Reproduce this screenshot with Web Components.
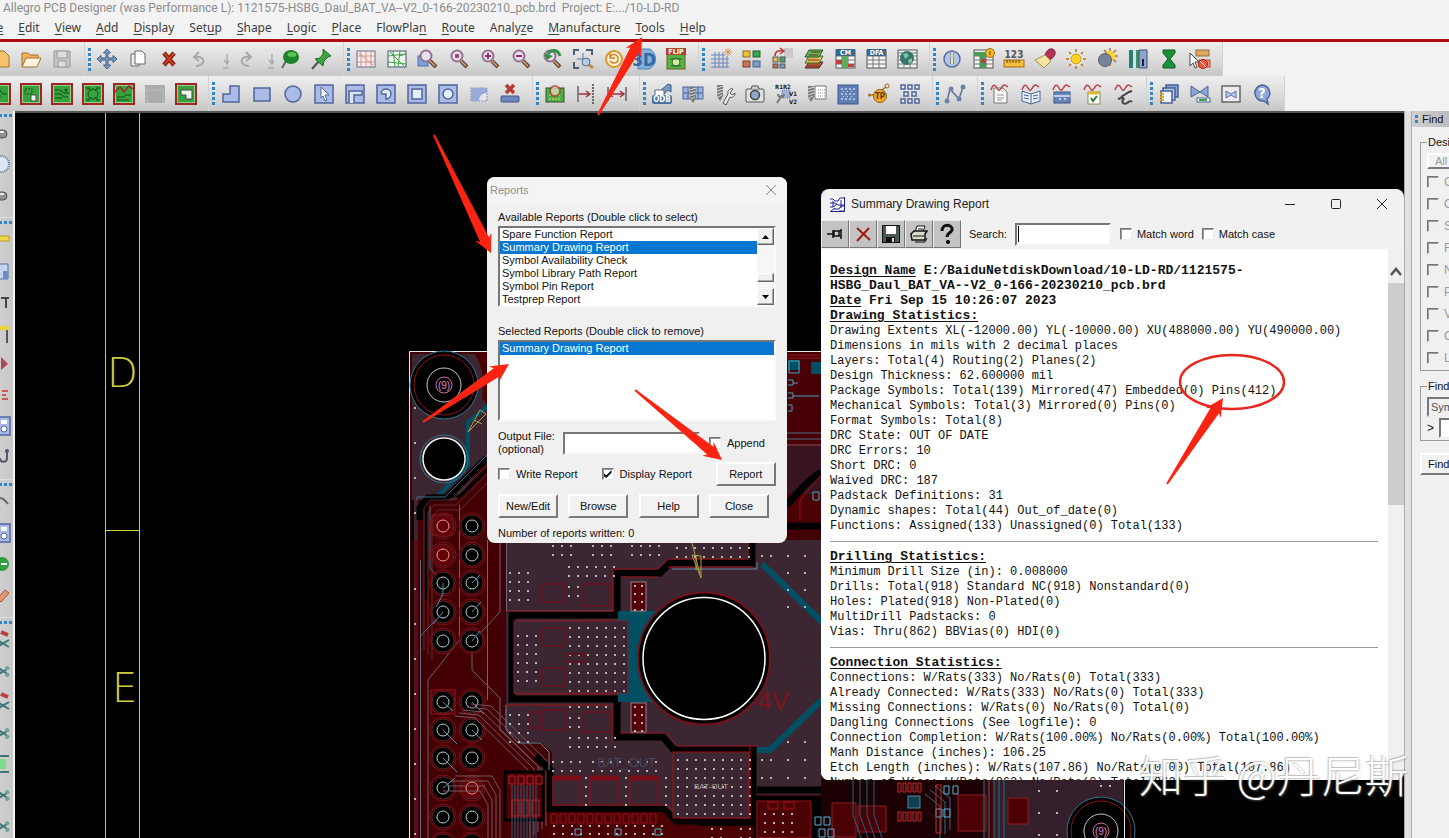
<!DOCTYPE html>
<html lang="en">
<head>
<meta charset="utf-8">
<title>Allegro PCB Designer</title>
<style>
  html, body { margin: 0; height: 100%; overflow: hidden; }
  body { background: #f2f2f2; font-family: "Liberation Sans", sans-serif; color: #111; }
</style>
</head>
<body>

<design-app>
  <report-picker slot="windows"></report-picker>
  <report-viewer slot="windows"></report-viewer>
</design-app>

<script>
// Shared base: render() returns the markup of the shadow root
class View extends HTMLElement {
  constructor() {
    super();
    this.attachShadow({ mode: 'open' });
  }
  connectedCallback() {
    this.shadowRoot.innerHTML = this.render();
  }
}

/* ---------- Icons, all on a 24 x 24 grid ---------- */

const lens = (inner) => `<path d="M14 14l6 6" stroke="#6b4a3a" stroke-width="4"/><path d="M14 14l5 5" stroke="#c9a27c" stroke-width="1.5"/>
  <circle cx="10" cy="9" r="5.5" fill="#e6e0ef" stroke="#96708f" stroke-width="2"/>${inner}`;
const card = (inner) => `<rect x="2" y="2" width="20" height="20" fill="#37a23b" stroke="#a02626" stroke-width="2"/>
  <rect x="3.5" y="3.5" width="17" height="17" fill="none" stroke="#8fd38a"/>${inner}`;
const blue = (inner) => `<rect x="3" y="3" width="18" height="18" fill="#a9bbe6" stroke="#51659c" stroke-width="1.5"/>${inner}`;
const wave = `<path d="M3 8c2-6 4-6 6-2s3 2 5-1 3-2 6 0" stroke="#b8434b" stroke-width="1.5" fill="none"/>`;
const sheet = (tag, color, inner = '') => `<rect x="3" y="3" width="19" height="18" fill="#f4f4f4" stroke="#555"/>
  <path d="M3 9h19M3 13h19M3 17h19M9 6v15M15 6v15" stroke="#777"/>${inner}
  ${tag ? `<rect x="3" y="2" width="19" height="7" fill="${color}"/><text x="12.5" y="8" font-size="7" font-weight="bold" fill="#fff" text-anchor="middle">${tag}</text>` : ''}`;
const drill = `<path d="M5 3h6v11l-3 5-3-5z" fill="#777"/><path d="M5 6l6-2M5 9l6-2M5 12l6-2M6 15l4-2" stroke="#ddd"/>`;

const ICONS = {
  file: `<path d="M7 4h9l5 5v11H7z" fill="#f4c36a" stroke="#a8712c"/>`,
  open: `<path d="M3 19V6h6l2 2h8v3" fill="#f0b457" stroke="#a8712c"/><path d="M3 20l4-9h15l-4 9z" fill="#fff4de" stroke="#a8712c"/>`,
  save: `<path d="M4 4h16v16H4z" fill="#c3c3c3" stroke="#999"/><path d="M7 4h10v7H7zM8 14h8v6H8z" fill="#ddd" stroke="#999"/>`,
  move: `<path d="M12 2l3.5 4H13v5h5V8.5l4 3.5-4 3.5V13h-5v5h2.5L12 22l-3.5-4H11v-5H6v2.5L2 12l4-3.5V11h5V6H8.5z" fill="#7d9dbf" stroke="#3f6186"/>`,
  copy: `<path d="M5 7h8v12H5z" fill="#eee" stroke="#666"/><path d="M9 4h7l3 3v10H9z" fill="#fff" stroke="#666"/>`,
  del: `<path d="M7 6l10 12M17 6L7 18" stroke="#7d1c10" stroke-width="4.5"/><path d="M7 6l10 12M17 6L7 18" stroke="#c9401c" stroke-width="2"/>`,
  undo: `<path d="M8 19c10 0 10-11-1-9M11 5L6 10l5 4" fill="none" stroke="#a9a9a9" stroke-width="2"/>`,
  redo: `<path d="M16 19c-10 0-10-11 1-9M13 5l5 5-5 4" fill="none" stroke="#a9a9a9" stroke-width="2"/>`,
  down: `<path d="M12 7v9M9 13l3 4 3-4M8 21h8" fill="none" stroke="#ababab" stroke-width="1.5"/>`,
  ball: `<path d="M8 14l-4 7" stroke="#666" stroke-width="2"/><ellipse cx="13" cy="10" rx="8" ry="7" fill="#1c8428"/><ellipse cx="14" cy="7.5" rx="4.5" ry="2.5" fill="#5cc25c"/>`,
  pin: `<path d="M10 14l-7 8" stroke="#555" stroke-width="2"/><path d="M14 2l8 7-3 1-4 4-1 5-8-7 5-1 3-4z" fill="#3da53f" stroke="#1b7023"/>`,
  ratsOff: `<rect x="3" y="4" width="18" height="16" fill="#f7eeee" stroke="#5d6a8c"/><path d="M7 4v16M12 4v16M17 4v16M3 9h18M3 15h18M5 6l14 12" stroke="#d3918a"/>`,
  ratsOn: `<rect x="3" y="4" width="18" height="16" fill="#eef7ee" stroke="#46536d"/><path d="M8 4l2 16M15 4l-2 16M3 9l18-2M3 15l18 2M5 5l14 14M14 9l7-2" stroke="#41a04a"/>`,
  zoomWin: `<rect x="2" y="9" width="10" height="10" fill="#78a2dc" stroke="#4a70a8"/>` + lens(''),
  zoomFit: lens('<path d="M8 7h4v4H8z" fill="#a8466b"/>'),
  zoomIn: lens('<path d="M7 9h6M10 6v6" stroke="#962f63" stroke-width="2"/>'),
  zoomOut: lens('<path d="M7 9h6" stroke="#962f63" stroke-width="2"/>'),
  zoomPrev: lens('<path d="M20 9C18 2 11 2 8 7" stroke="#2e9340" stroke-width="3"/><path d="M4 6l3 7 6-4z" fill="#2e9340"/>'),
  zoomSel: `<path d="M3 8V3h5M15 3h6v5M3 15v6h5" fill="none" stroke="#4c5f7b" stroke-width="2"/><path d="M6 12h12M12 6v12" stroke="#5878a4"/><path d="M17 17l5 4" stroke="#c58e45" stroke-width="3"/><circle cx="15" cy="15" r="4" fill="#b4cde8" stroke="#55718d"/>`,
  refresh: `<circle cx="12" cy="12" r="8" fill="#fff1db" stroke="#dc962b" stroke-width="2"/><path d="M8 10c2-4 8-3 8 2s-6 5-8 2M8 6v5h5" fill="none" stroke="#d58418" stroke-width="1.5"/>`,
  view3d: `<path d="M4 6l4-4h9c8 5 7 17-1 20H5z" fill="#7fb0de" stroke="#4e87be"/><text x="11" y="19" font-size="17" font-weight="bold" fill="#33699f" text-anchor="middle">3D</text>`,
  flip: `<rect x="3" y="7" width="18" height="15" fill="#55b445" stroke="#745b26"/><circle cx="12" cy="15" r="4" fill="#d8e8a0" stroke="#276b2a"/><path d="M6 12h12M7 19h10" stroke="#276b2a"/><rect x="2" y="1" width="20" height="7" fill="#b0402f"/><text x="12" y="7" font-size="7" font-weight="bold" fill="#fff" text-anchor="middle">FLIP</text>`,
  grid: `<path d="M6 5v16M10 5v16M14 5v16M18 9v12M2 8h14M2 12h18M2 16h18M2 20h18" stroke="#6c86bb"/><path d="M19 1v8M15 5h8M16 2l6 6M22 2l-6 6" stroke="#d29556"/>`,
  tiles: `<rect x="3" y="4" width="7" height="6" fill="#ecc332" stroke="#8a6d22"/><rect x="13" y="4" width="7" height="6" fill="#3ba652" stroke="#23602c"/><rect x="3" y="14" width="7" height="6" fill="#c87757" stroke="#7f3f28"/><rect x="13" y="14" width="7" height="6" fill="#7c9ccb" stroke="#44618f"/>`,
  swap: `<path d="M13 1h9v10h-9z" fill="#c9c9c9"/><rect x="2" y="10" width="5" height="5" fill="#d9c14d" stroke="#555"/><rect x="9" y="10" width="5" height="5" fill="#49a45b" stroke="#555"/><rect x="2" y="17" width="5" height="4" fill="#c66f55" stroke="#555"/><rect x="9" y="17" width="5" height="4" fill="#7c9ccb" stroke="#555"/><path d="M4 9c0-5 4-6 8-5M9 1l4 3-4 3" stroke="#c03a3a" fill="none" stroke-width="1.5"/>`,
  layers: `<path d="M7 15h14l-4 6H3z" fill="#b3523b" stroke="#4b2418"/><path d="M7 9h14l-4 7H3z" fill="#e1c050" stroke="#3d6b28"/><path d="M7 3h14l-4 7H3z" fill="#63b35a" stroke="#255c29"/><path d="M7 8h9M9 5h9M6 13h11M6 19h11" stroke="#7c2f22"/>`,
  cm: sheet('CM', '#39688c', '<path d="M9 9h6v12H9z" fill="#5aae5c"/><path d="M3 13h6v4H3zM15 17h6v3h-6z" fill="#c33f3f"/>'),
  dfa: sheet('DFA', '#3d6793'),
  globe: sheet('', '', '<path d="M3 6h19" stroke="#777"/><circle cx="12" cy="11" r="7" fill="#35756b"/><path d="M8 7l4-1 2 3-4 3zM13 13l4-2v4l-3 2z" fill="#7fc0a2"/>'),
  info: `<circle cx="12" cy="12" r="8" fill="#b4c3e8" stroke="#5b6c9d" stroke-width="1.5"/><path d="M12 10v7M12 6v2" stroke="#5b6c9d" stroke-width="4"/><path d="M12 10v7M12 6v2" stroke="#ecea9a" stroke-width="2.5"/>`,
  sheetInfo: sheet('', '', '<path d="M3 5h12v4H3zM9 9h6v12H9z" fill="#4c9a58"/><path d="M10 12h5v4h-5z" fill="#c33f3f"/>') + `<circle cx="19" cy="6" r="4.5" fill="#f0ba28" stroke="#9f6d14"/><path d="M19 4v4" stroke="#503a10"/>`,
  ruler: `<text x="12" y="11" font-size="10" font-weight="bold" fill="#555" text-anchor="middle">123</text><rect x="2" y="13" width="20" height="7" fill="#f2c03c" stroke="#a4661b"/><path d="M5 13v3M8 13v3M11 13v3M14 13v3M17 13v3" stroke="#6a3f11"/>`,
  brush: `<path d="M12 9c1-6 6-9 9-6s0 8-5 10z" fill="#b93156" stroke="#7d1d38"/><path d="M12 8l6 6-7 7-9-8z" fill="#f2e5a0" stroke="#a98f4a"/>`,
  sun: `<path d="M12 2v20M2 12h20M5 5l14 14M19 5L5 19" stroke="#b57325" stroke-width="1.5"/><circle cx="12" cy="12" r="7" fill="#eee"/><circle cx="12" cy="12" r="5" fill="#ffd42a" stroke="#cf8b16"/>`,
  shade: `<path d="M15 1v18M6 9h17M9 3l12 12M21 3L9 15" stroke="#b57325" stroke-width="1.5"/><circle cx="15" cy="9" r="5" fill="#ffd42a"/><circle cx="10" cy="13" r="6.5" fill="#77839c" stroke="#535f78"/>`,
  books: `<path d="M3 3h4v18H3z" fill="#2d7b78"/><path d="M7 3h3v18H7z" fill="#cfe6d9"/><path d="M10 3h3v18h-3z" fill="#3d9364"/><path d="M13 3h8v18h-8z" fill="#8fa5cb" stroke="#3a5078"/><path d="M17 12v7" stroke="#223" stroke-width="2"/>`,
  glass: `<path d="M6 3h12v3l-5 6 5 6v3H6v-3l5-6-5-6z" fill="#1a9138" stroke="#0d5b22"/>`,
  stop: `<rect x="8" y="3" width="13" height="6" fill="#dba765" stroke="#9d6c36"/><rect x="11" y="13" width="11" height="7" fill="#e89090" stroke="#b43"/><circle cx="15" cy="17" r="4.5" fill="#f05a3a" stroke="#b4220d"/><path d="M12 14l6 6" stroke="#fff"/><path d="M2 6l9 9H7l2 5-2 1-2-5-3 3z" fill="#fff" stroke="#444"/>`,

  card1: card('<path d="M5 7h6l4 5h4M5 14h8" stroke="#154f1c" fill="none"/>'),
  card2: card('<path d="M6 7h7v5H6z" stroke="#154f1c" fill="none" stroke-dasharray="2 1"/><path d="M12 13h5v6h-5z" fill="#fff" stroke="#445"/>'),
  card3: card('<path d="M5 8h5l4 3h5M5 12h6l3 3h4M5 16h7" stroke="#154f1c" fill="none"/><circle cx="16" cy="8" r="1.5" fill="#154f1c"/>'),
  card4: card('<circle cx="12" cy="12" r="5" fill="none" stroke="#154f1c"/><path d="M5 6h4M15 6h4M5 18h4M15 18h4M7 6l3 3M17 6l-3 3M7 18l3-3M17 18l-3-3" stroke="#154f1c"/>'),
  card5: card('<path d="M2 11l6-6 4 5 5-6 4 3" stroke="#a02626" stroke-width="1.5" fill="none"/><path d="M5 15h6l3-2h5M5 18h12" stroke="#154f1c" fill="none"/>'),
  blank: `<rect x="2" y="3" width="20" height="18" fill="#acacac"/><path d="M4 21V8h16v13" stroke="#bbb" fill="none"/>`,
  card6: card('<path d="M7 8h11v9h-6v-4H7z" fill="#eef4e6" stroke="#445"/>'),
  shL: `<path d="M4 12h7V4h9v16H4z" fill="#a9bbe6" stroke="#51659c" stroke-width="1.5"/>`,
  shRect: `<rect x="4" y="6" width="16" height="13" fill="#a9bbe6" stroke="#51659c" stroke-width="1.5"/>`,
  shCircle: `<circle cx="12" cy="12" r="8" fill="#a9bbe6" stroke="#51659c" stroke-width="1.5"/>`,
  shArrow: blue('<path d="M9 5l8 8h-4l2 5-2 1-2-5-2 2z" fill="#fff" stroke="#51659c"/>'),
  shL2: blue('<path d="M6 21V9h13v4h-8v8" fill="#d9e2f7" stroke="#51659c" stroke-width="1.5"/>'),
  shArc: blue('<path d="M7 11a5 5 0 1 1 5 6v-5H7" fill="#e7edfb" stroke="#51659c" stroke-width="1.5"/>'),
  shSq: blue('<rect x="7" y="7" width="10" height="10" fill="#e7edfb" stroke="#51659c" stroke-width="1.5"/>'),
  shRing: blue('<circle cx="12" cy="12" r="5" fill="#e7edfb" stroke="#51659c" stroke-width="1.5"/>'),
  shCut: `<path d="M4 6h16v13H4z" fill="#e3e6ee" stroke="#8b93a6" stroke-dasharray="2 1"/><path d="M4 6h16v5c-5 0-8 3-8 8H4z" fill="#97abdb"/>`,
  shDel: `<rect x="3" y="14" width="18" height="6" rx="1" fill="#6f86bd" stroke="#435789"/><path d="M8 3l8 8M16 3l-8 8" stroke="#b93a33" stroke-width="3.5"/>`,
  boardChk: `<rect x="3" y="6" width="18" height="14" fill="#4fae43" stroke="#31552a"/><path d="M6 13h12M6 17h12" stroke="#dfd86c" stroke-dasharray="2 1"/><circle cx="12" cy="9" r="5" fill="#f0dcd0" opacity=".7" stroke="#b3392f" stroke-width="2"/>`,
  dimA: `<path d="M4 4v16" stroke="#666" stroke-width="1.5"/><path d="M19 2v20" stroke="#444" stroke-dasharray="2 1" stroke-width="1.5"/><path d="M5 12h11M12 9l4 3-4 3" stroke="#a03540" fill="none" stroke-width="1.5"/>`,
  dimB: `<path d="M3 5v14M21 5v14" stroke="#666" stroke-width="1.5"/><path d="M4 12h15M15 9l4 3-4 3M8 9l-4 3 4 3" stroke="#a03540" fill="none" stroke-width="1.5"/>`,
  odb: `<path d="M9 10L18 2l3 1v7l-3-2-5 5" fill="#7899c8" stroke="#3c5d8f"/><path d="M5 8h9v6H5z" fill="#fff" stroke="#667"/><rect x="2" y="13" width="20" height="9" rx="2" fill="#4e6ea3"/><text x="12" y="20" font-size="8" font-weight="bold" fill="#fff" text-anchor="middle">ODB</text>`,
  drillGrid: `<rect x="2" y="5" width="20" height="12" fill="#9cb4dd" stroke="#50679a"/><path d="M2 11h20M7 5v12M17 5v12" stroke="#50679a"/><g transform="translate(4 2)">${drill}</g>`,
  drillWrench: drill + `<path d="M11 21l5-9c-1-4 3-6 5-5l-3 4 2 2 3-2c0 4-3 5-5 4l-4 8z" fill="#eee" stroke="#555"/>`,
  camera: `<rect x="3" y="7" width="18" height="13" rx="1" fill="#e2e2e2" stroke="#555"/><path d="M8 7l1-3h6l1 3" fill="#ccc" stroke="#555"/><circle cx="12" cy="13" r="4.5" fill="#8fa9cc" stroke="#444" stroke-width="1.5"/>`,
  refs: `<path d="M8 8h8v8H8z" fill="#9fb5da" stroke="#61769f" stroke-dasharray="1 1"/><path d="M3 21l5-8M4 12c0 4 6 4 6 0" stroke="#777" fill="none" stroke-width="2"/><text x="1" y="7" font-size="6" font-weight="bold" fill="#222">R1R2</text><text x="15" y="14" font-size="6" font-weight="bold" fill="#222">V1</text><text x="15" y="22" font-size="6" font-weight="bold" fill="#222">V2</text>`,
  drillTab: `<rect x="10" y="4" width="11" height="13" fill="#fff" stroke="#777"/><path d="M13 8h7M13 11h7M13 14h7" stroke="#888" stroke-dasharray="1 1"/><g transform="translate(-2 1)">${drill}</g>`,
  starry: `<rect x="2" y="3" width="20" height="19" fill="#5f7fb6" stroke="#3b588c"/><path d="M5 7h14M5 12h14M5 17h14" stroke="#fff" stroke-dasharray="2 2"/><path d="M7 9.500h12M7 14.500h12" stroke="#dfe8fa" stroke-dasharray="1 3"/>`,
  tp: `<path d="M4 13h6M15 8l4-3" stroke="#a56c1a" stroke-width="1.5"/><circle cx="13" cy="14" r="6.5" fill="#f1a925" stroke="#9a5f10"/><circle cx="20" cy="4" r="2" fill="none" stroke="#a56c1a"/><circle cx="2.5" cy="13" r="1.5" fill="#a56c1a"/><text x="13" y="17" font-size="8" font-weight="bold" fill="#5a3a0a" text-anchor="middle">TP</text>`,
  nodes: `<path d="M3 3h4v4H3zM10 3h4v4h-4zM17 3h4v4h-4zM6 10h4v4H6zM14 10h4v4h-4zM3 17h4v4H3zM10 17h4v4h-4zM17 17h4v4h-4z" fill="#e6edfb" stroke="#50679a" stroke-width="1.5"/>`,
  zig: `<path d="M4 19L7 7l9 10 4-12" fill="none" stroke="#5f7299" stroke-width="1.5"/><g fill="#6f82ac"><circle cx="4" cy="19" r="2.5"/><circle cx="8" cy="7" r="2.5"/><circle cx="16" cy="17" r="2.5"/><circle cx="20" cy="5" r="2.5"/></g>`,
  wvDoc: `<path d="M6 6h9l4 4v11H6z" fill="#f6f6f6" stroke="#777"/><path d="M9 13h7M9 16h7M9 18h5" stroke="#999"/>` + wave,
  wvBook: `<path d="M3 9l9 3 9-3v10l-9 3-9-3z" fill="#e8f0fb" stroke="#4b6594"/><path d="M12 12v10M5 13l5 1M5 16l5 1M14 14l5-1M14 17l5-1" stroke="#4b6594"/>` + wave,
  wvTool: `<rect x="4" y="10" width="16" height="11" fill="#6784bb" stroke="#3a5488"/><path d="M4 14h16M9 17h2M14 17h2" stroke="#dbe6fa" stroke-width="1.5"/>` + wave,
  wvCheck: `<rect x="7" y="10" width="12" height="12" fill="#fff" stroke="#8a8a5a"/><path d="M7 11h12" stroke="#d9b93a" stroke-width="3"/><path d="M10 16l2 3 4-5" stroke="#2b7d34" fill="none" stroke-width="2"/>` + wave,
  wvCable: `<path d="M20 9l-3 1-8 5M6 17c5-2 7-1 5 1s1 5 4 3 3-3 5-1" stroke="#444" fill="none" stroke-width="2"/>` + wave,
  stack: `<rect x="9" y="3" width="12" height="12" fill="#86a2d8" stroke="#47618f" stroke-width="1.5"/><rect x="6" y="6" width="12" height="12" fill="#b7c8ea" stroke="#47618f" stroke-width="1.5"/><rect x="4" y="9" width="11" height="12" fill="#eef3fc" stroke="#47618f" stroke-width="1.5"/><path d="M3 12h4M3 15h4M3 18h4" stroke="#d3a12c" stroke-width="2"/>`,
  bow: `<path d="M3 4l9 6 8-6v11l-8-5-9 5z" fill="#8ea6d6" stroke="#4a6293"/><rect x="9" y="16" width="13" height="4" fill="#fff" stroke="#47618f"/><path d="M11 18h8" stroke="#41a04a" stroke-width="2"/>`,
  bowWin: `<rect x="3" y="4" width="18" height="16" fill="#ececec" stroke="#666" stroke-width="1.5"/><path d="M7 9l5 3 5-3v7l-5-3-5 3z" fill="#b8c8ea" stroke="#5d73a2"/>`,
  help: `<path d="M12 3a8 8 0 1 0 2 16l4 3-1-5A8 8 0 0 0 12 3z" fill="#91a7d8" stroke="#4d6498" stroke-width="1.5"/><text x="12" y="16" font-size="14" font-weight="bold" fill="#fff" text-anchor="middle">?</text>`,

  vCyl: `<path d="M4 9h10q4 0 4 4t-4 4H4z" fill="#8f8f8f" stroke="#555"/><path d="M6 11h9" stroke="#eee" stroke-width="2"/>`,
  vRound: `<circle cx="12" cy="12" r="8" fill="#dfe7f2" stroke="#55759d" stroke-width="2" stroke-dasharray="1 1"/>`,
  vBar: `<path d="M4 8h16v5H4z" fill="#f0d848" stroke="#b59a25"/>`,
  vSave: `<path d="M9 5h10v15H9z" fill="#c7d6f0" stroke="#5573a9"/><path d="M14 12h5v8h-5z" fill="#6d8ec5"/>`,
  vTee: `<path d="M12 8h8M17 8v10" stroke="#444" stroke-width="2"/>`,
  vYel: `<path d="M10 5h10v4H10z" fill="#edd23f"/><path d="M18 9v13" stroke="#555" stroke-width="2"/>`,
  vRed: `<path d="M12 5l7 7-7 6z" fill="#a8485a"/>`,
  vRib: `<path d="M13 8h6M13 12h4M13 16h6" stroke="#cc5b4f" stroke-width="2" fill="none"/>`,
  vFld: blue('<rect x="12" y="6" width="6" height="4" fill="#fff"/><circle cx="15" cy="15" r="3" fill="#fff" stroke="#51659c"/>'),
  vHook: `<path d="M18 6v7c0 5-7 5-7 0" stroke="#556" stroke-width="2" fill="none"/><circle cx="18" cy="6" r="2" fill="#556"/>`,
  vArc: `<path d="M10 8c4 0 6 2 9 6" stroke="#666" stroke-width="2" fill="none"/>`,
  vDot: `<circle cx="13" cy="12" r="7" fill="#2ea03f"/><path d="M12 12h6" stroke="#fff" stroke-width="2"/>`,
  vPen: `<path d="M8 16l8-9 4 3-8 9z" fill="#e59a75" stroke="#9c5335"/>`,
  vPart: `<path d="M8 8l12 8M8 16l12-7" stroke="#3f7779" stroke-width="2"/><circle cx="18" cy="16" r="2" fill="#6ba59c"/><circle cx="18" cy="9" r="2" fill="#6ba59c"/>`,
  vPartR: `<path d="M12 4l7 3" stroke="#b7403c" stroke-width="4"/><path d="M8 12l12 7M8 19l12-7" stroke="#3f7779" stroke-width="2"/>`,
  vPartG: `<path d="M8 4h12M8 20h12" stroke="#3f7779" stroke-width="2"/><path d="M8 7h9v10H8z" fill="#7fdc8a"/>`
};

class ToolIcon extends View {
  render() {
    const size = this.hasAttribute('small') ? '14px' : '31px';
    return `<style>
      :host { display: block; flex: none; }
      button { display: grid; place-items: center; width: ${size}; height: 31px; padding: 0; border: 0; background: none; overflow: hidden; font: inherit; }
      svg { width: 24px; height: 24px; fill: none; font-family: "DejaVu Sans Condensed", sans-serif; }
    </style>
    <button type="button" aria-label="${this.getAttribute('name')}"><svg viewBox="0 0 24 24">${ICONS[this.getAttribute('name')]}</svg></button>`;
  }
}
customElements.define('tool-icon', ToolIcon);

// One docked group: dotted blue grip, then its buttons
class ToolGroup extends View {
  render() {
    return `<style>
      :host { display: flex; align-items: center; flex: none; padding-right: 8px; background: linear-gradient(#eee, #d9d9d9 60%, #c6c6c6); box-shadow: inset -1px 0 #d2d2d2; }
      i { flex: none; width: 3px; height: 23px; margin-left: 3px; background: repeating-linear-gradient(#2f86c9 0 3px, transparent 3px 5px); }
      :host([column]) { flex-direction: column; padding: 0 0 8px; background: linear-gradient(90deg, #d6d6d6, #c6c6c6); box-shadow: inset 0 -1px #ddd; }
      :host([column]) i { width: 23px; height: 3px; margin: 3px 0 0; background: repeating-linear-gradient(90deg, #2f86c9 0 3px, transparent 3px 5px); }
      :host([nogrip]) i { display: none; }
    </style><i></i><slot></slot>`;
  }
}
customElements.define('tool-group', ToolGroup);

const group = (names, attrs = '') => `<tool-group ${attrs}>${names.split(' ').map(n =>
  `<tool-icon name="${n}" ${n === 'down' ? 'small' : ''}></tool-icon>`).join('')}</tool-group>`;

/* ---------- Title and menus ---------- */

class MenuBar extends View {
  render() {
    const items = ['Fil_e', '_Edit', '_View', '_Add', '_Display', 'Set_up', '_Shape', '_Logic', '_Place', 'FlowPla_n', '_Route', 'Analy_ze', '_Manufacture', '_Tools', '_Help'];
    return `<style>
      :host { display: block; overflow: hidden; background: #f3f3f3; border-bottom: 3px solid #a90f12; font: 12px/16px "Noto Sans", sans-serif; }
      h1 { margin: 0; padding-left: 3px; font: 12px/16px Roboto, sans-serif; color: #8c8c8c; white-space: pre; }
      nav { display: flex; gap: 15px; margin-left: -16px; line-height: 23px; }
      a { color: #3c3c3c; text-decoration: none; }
      u { text-underline-offset: 2px; }
    </style>
    <h1>Allegro PCB Designer (was Performance L): 1121575-HSBG_Daul_BAT_VA--V2_0-166-20230210_pcb.brd  Project: E:.../10-LD-RD</h1>
    <nav>${items.map(t => `<a href="#">${t.replace(/_(.)/, '<u>$1</u>')}</a>`).join('')}</nav>`;
  }
}
customElements.define('menu-bar', MenuBar);

/* ---------- Board drawing ---------- */

const dots = (x, y, cols, rows, dx = 9, dy = 9) => {
  let s = '';
  for (let r = 0; r < rows; r++) for (let c = 0; c < cols; c++) s += `M${x + c * dx} ${y + r * dy}h2v2h-2z`;
  return `<path d="${s}" fill="#b9b4b6"/>`;
};
const pad = (x, y, bare) => `<circle cx="${x}" cy="${y}" r="13" fill="none" stroke="#7c1016"/>
  <circle cx="${x}" cy="${y}" r="11" fill="${bare ? '#640006' : '#000'}" stroke="#54262c"/>
  <circle cx="${x}" cy="${y}" r="6" fill="none" stroke="${bare ? '#e7a6a0' : '#b9ccd0'}"/>`;
const mount = (x, y) => `<circle cx="${x}" cy="${y}" r="34" fill="#000" stroke="#2c7792"/>
  <circle cx="${x}" cy="${y}" r="30" fill="none" stroke="#8c1418"/><circle cx="${x}" cy="${y}" r="17" fill="none" stroke="#c9c9c9"/>
  <circle cx="${x}" cy="${y}" r="8" fill="none" stroke="#d06fa8"/><text x="${x}" y="${y + 4}" font-size="10" fill="#e58ac0" text-anchor="middle">(9)</text>`;
const lines = (d, color, w = 1) => `<path d="${d}" fill="none" stroke="${color}" stroke-width="${w}"/>`;

class BoardCanvas extends View {
  // Fine traces, repeated side by side
  bus(points, n, dx, dy, color) {
    let s = '';
    for (let i = 0; i < n; i++) s += 'M' + points.map(([x, y]) => `${x + i * dx} ${y + i * dy}`).join('L');
    return lines(s, color);
  }
  boxes(x, y, n, w, h, step, color) {
    let s = '';
    for (let i = 0; i < n; i++) s += `M${x + i * step} ${y}h${w}v${h}h-${w}z`;
    return lines(s, color);
  }
  render() {
    const yellow = '#cfcb3c', red = '#9c1218', teal = '#005064', plum = '#3c2631', rust = '#420004';
    return `<style>
      :host { display: block; min-width: 0; overflow: hidden; background: #000; }
      svg { display: block; width: 100%; height: 100%; font-family: "Liberation Sans", sans-serif; }
    </style>
    <svg viewBox="15 113 1389 725" preserveAspectRatio="xMinYMin slice">
      ${lines('M105.5 113V838M139.5 113V838M105.5 530.5H139.5', yellow)}
      <g fill="${yellow}" font-family="DejaVu Sans Light, DejaVu Sans" font-weight="200" font-size="40"><text x="107" y="387">D</text><text x="112" y="702">E</text></g>

      <rect x="409" y="351" width="715" height="487" fill="${rust}"/>
      <path d="M412 354H487V460L457 500H418V540H412z" fill="${plum}"/>
      <path d="M506 540H821V795H753V822H676L664 810H552V752L540 742H520L506 730z" fill="${plum}"/>
      <rect x="411" y="500" width="3" height="338" fill="#000"/>
      <rect x="414" y="540" width="4" height="298" fill="#5c0b1b"/>
      ${lines('M409.5 838V351.5H1124.5V838', '#e8e8e8')}
      ${dots(414, 372, 1, 5, 9, 35)}${dots(414, 588, 1, 8, 9, 35)}
      <path d="M487 354H475Q486 372 482 398L487 404z" fill="#4b0004"/>
      ${mount(444, 385)}
      <path d="M489 405L468 422V465L434 500" stroke="${teal}" stroke-width="4" fill="none"/>
      <circle cx="444" cy="459" r="24" fill="none" stroke="#2c7792"/><circle cx="444" cy="459" r="21" fill="#000" stroke="#f2f2f2" stroke-width="1.5"/>
      ${lines('M468 432L480 410L486 414zM474 420l8 4', '#a9a344')}

      <path d="M420 520V508L428 498H446L487 458" stroke="#000" stroke-width="7" fill="none"/>
      <path d="M487 470L460 496H432L426 504V600" stroke="#000" stroke-width="3" fill="none"/>
      ${this.bus([[487, 465], [452, 500], [430, 500], [424, 508], [424, 650]], 3, 4, 5, '#5c2a33')}
      ${lines('M459.5 505V640L428 680V838M500 505V612L472 642V670L500 698V730L540 768V800', '#67646f')}
      ${lines('M417 500V497H445L487 455M420.5 838V636L443 612M430 506V568L443 583', '#3c6f85')}
      <rect x="432" y="515" width="20" height="20" fill="none" stroke="${red}"/>
      ${[526, 555, 583, 612, 641].map((y, i) => pad(443, y, i < 2) + pad(472, y)).join('')}
      <rect x="431" y="690" width="24" height="24" fill="none" stroke="${red}"/>
      ${[702, 730, 758, 788, 817, 845].map((y, i) => pad(443, y) + pad(472, y, i === 3)).join('')}
      ${lines('M443 583V594L436 607M472 583l8-8M443 612l-10 12M472 612l9-10M472 641l8-10M443 702l10 9M443 730l14 14M472 702l12 12M472 730l10 10M443 758l14 14M443 788l12-10', '#4792ae')}
      ${this.bus([[455, 716], [475, 718], [530, 772], [530, 838]], 5, 4, -3, '#79555f')}
      ${this.bus([[455, 776], [492, 776], [500, 790], [500, 838]], 4, -4, 5, '#79555f')}
      ${lines('M420.5 560V838M487.5 540V700M506.5 543V611H614', '#5b6f80')}

      <!-- Copper boundaries -->
      <path d="M752 543V563H670L660 573H617V615H512V699H617V737H663L674 750H753V821H676L664 809H550V770L536 756" stroke="#000" stroke-width="7" fill="none"/>
      <path d="M757 790H821" stroke="#000" stroke-width="7"/>
      ${lines('M748 543V559H668L657 569H613V611H506M668 567H752M621 577H657', red)}
      ${lines('M515 621V694H618V620zM506 705H612V742M620 733H666L678 746H757M750 746V818H680L667 805H552', red)}
      ${lines('M672 569H757V562M506 705V730L518 743H540L549 752V770', '#5f8aa0')}
      <rect x="618" y="611" width="42" height="91" fill="${teal}"/>
      <rect x="514" y="621" width="114" height="72" fill="${plum}" stroke="#70202c"/>
      <path d="M762 564L822 622M757 750H770L822 700" stroke="${teal}" stroke-width="6" fill="none"/>
      <circle cx="704" cy="658.5" r="66" fill="#000" stroke="#74121c" stroke-width="2"/>
      <circle cx="704" cy="658.5" r="61" fill="none" stroke="#fff" stroke-width="1.5"/>
      ${lines('M692 543L700 574M692 555L701 578L701 556zM696 556v14', '#b3a244')}
      <path d="M753 796H821V838H700V822H753z" fill="#000"/>
      <rect x="757" y="801" width="54" height="37" fill="#4b0004" stroke="${red}"/>

      ${dots(517, 635, 3, 6)}${dots(569, 627, 7, 8)}
      ${dots(509, 572, 3, 4)}${dots(552, 545, 3, 2)}${dots(592, 545, 3, 2)}${dots(631, 545, 4, 2)}
      ${dots(568, 566, 6, 2)}${dots(568, 586, 2, 2)}${dots(676, 547, 9, 2)}
      ${dots(509, 714, 3, 4)}${dots(569, 706, 5, 1)}${dots(569, 717, 2, 2)}${dots(569, 737, 6, 2)}
      ${dots(552, 761, 4, 2)}${dots(592, 761, 8, 2)}${dots(761, 555, 2, 1)}${dots(761, 759, 2, 2, 9, 18)}
      ${dots(787, 555, 2, 4, 17, 17)}${dots(787, 741, 2, 3, 17, 18)}
      <rect x="673" y="752" width="76" height="66" fill="${plum}" stroke="${red}"/>${dots(677, 759, 9, 7)}
      ${[553, 590, 630].map(x => `<rect x="${x}" y="777" width="28" height="28" fill="${plum}" stroke="#6a141f" stroke-width="2"/><path d="M${x} 778h28" stroke="#7a0d18" stroke-width="5"/>`).join('')}
      ${dots(585, 777, 1, 4)}${dots(625, 777, 1, 4)}${dots(665, 777, 1, 4)}
      ${[582, 703].map(y => `<rect x="631" y="${y}" width="15" height="29" fill="#550007" stroke="#8d8388"/>` + dots(634, y + 3, 2, 4, 7, 8)).join('')}
      ${lines('M542 584h22v18h-22zM583 584h28v22h-28zM542 628h22v18h-22zM542 668h22v18h-22zM583 712h28v20h-28zM543 710h24v20h-24zM530 712h8v16h-8zM566 654h18v8h-18z', '#5d1622', 2)}
      <text x="597" y="767" font-size="13" fill="#454761">BAT_OUT</text>
      <text x="694" y="789" font-size="8" fill="#b9adb3">BAT-OUT</text>
      <text x="757" y="710" font-size="26" fill="#7c1420">4V</text>

      <!-- Lower parts row -->
      <rect x="505" y="772" width="38" height="48" fill="#500006" stroke="#000" stroke-width="3"/>
      ${this.boxes(509, 776, 4, 6, 8, 9, '#b3242a')}${this.bus([[512, 785], [512, 838]], 9, 3, 0, '#2c6075')}
      ${this.boxes(512, 800, 3, 7, 16, 10, '#b3242a')}
      <path d="M550 812H663L676 826H753V838H550z" fill="#4b0004"/>
      ${this.boxes(551, 814, 12, 6, 9, 9, red)}${dots(553, 825, 13, 1)}${dots(553, 833, 13, 1)}
      ${this.boxes(575, 829, 3, 6, 6, 40, '#58b1d0')}
      ${dots(711, 828, 2, 2)}${dots(740, 828, 2, 2)}${dots(764, 813, 4, 3)}${this.boxes(768, 802, 2, 10, 7, 16, red)}

      <!-- Strip between the two windows -->
      <rect x="787" y="354" width="34" height="90" fill="#470005"/>
      <rect x="787" y="444" width="34" height="50" fill="#371420"/>
      <path d="M787 494H821V525H787z" fill="#4b0004"/><path d="M821 472Q808 480 787 505M787 526H821" stroke="#000" stroke-width="7" fill="none"/>
      <path d="M788 360h12v10h-12zM811 362h10v12h-10z" fill="${teal}"/>
      ${this.bus([[787, 433], [821, 433]], 3, 0, 6, '#4d6f82')}${lines('M787 355H821M787 358H821M787 445H821M800 520V500L821 475', red)}
      ${lines('M789 361h10v12h-10zM788 380h5v5h-5M793 383h5M788 393h5v5h-5M793 396h26M788 405h4v6h-4M813 492h6v8h-6z', '#4fa3c2')}

      <!-- Below the report window -->
      <rect x="821" y="779" width="163" height="59" fill="#1d0003"/>
      <rect x="994" y="779" width="129" height="59" fill="#341f2a"/>
      <path d="M832 803h24v34h-24zM858 806h28v26h-28zM958 795h28v36h-28zM1008 798h20v26h-20z" fill="#4b0006" stroke="#8f1c22"/>
      ${this.bus([[853, 779], [853, 815], [861, 838]], 4, 7, 0, '#1e657d')}
      ${this.bus([[984, 779], [984, 838]], 5, 5, 0, '#28708a')}${this.bus([[940, 838], [940, 806], [925, 794]], 3, 5, -4, '#28708a')}
      ${this.boxes(944, 786, 2, 5, 8, 9, '#58b1d0')}${this.boxes(936, 809, 2, 6, 8, 8, '#58b1d0')}${this.boxes(815, 817, 2, 6, 8, 9, '#58b1d0')}${this.boxes(819, 829, 2, 6, 8, 9, '#58b1d0')}
      ${this.boxes(898, 783, 5, 3, 9, 5, '#c12c2c')}${this.boxes(898, 812, 5, 3, 9, 5, '#c12c2c')}${this.boxes(936, 785, 1, 5, 48, 9, '#c12c2c')}
      <rect x="908" y="796" width="12" height="12" fill="#123f50" stroke="#4f8aa0"/>
      ${dots(1038, 790, 2, 3, 18, 22)}${dots(1100, 785, 2, 1)}
      ${mount(1101, 831)}
      ${lines('M1124.5 780V838', '#e8e8e8')}
    </svg>`;
  }
}
customElements.define('board-canvas', BoardCanvas);

/* ---------- Form parts ---------- */

const CONTROL_CSS = `
  label { display: flex; align-items: center; gap: 6px; white-space: nowrap; }
  input[type=checkbox] { appearance: none; flex: none; display: grid; width: 12px; height: 12px; margin: 0; background: #fff; border: 1px solid; border-color: #777 #eee #eee #777; box-shadow: inset 1px 1px #999; }
  input[type=checkbox]:checked::before { content: ""; margin: 1px; background: #111; clip-path: polygon(0 40%, 35% 65%, 100% 0, 100% 35%, 35% 100%, 0 75%); }
  input[type=text] { box-sizing: border-box; min-width: 0; padding: 0 3px; background: #fff; border: 2px solid; border-color: #777 #f4f4f4 #f4f4f4 #777; border-radius: 0; font: inherit; outline: 0; }
  .push { box-sizing: border-box; flex: none; height: 24px; padding: 0; background: #f2f2f2; border: 2px solid; border-color: #fff #7a7a7a #7a7a7a #fff; font: inherit; color: #111; }
`;

class ReportPicker extends View {
  render() {
    const list = ['Spare Function Report', 'Summary Drawing Report', 'Symbol Availability Check', 'Symbol Library Path Report', 'Symbol Pin Report', 'Testprep Report'];
    return `<style>
      ${CONTROL_CSS}
      :host { position: absolute; left: 487px; top: 177px; width: 300px; box-sizing: border-box; padding-bottom: 3px; border-radius: 8px; background: #f0f0f0; font: 11px/13px "Liberation Sans", sans-serif; overflow: hidden; }
      header { display: flex; justify-content: space-between; align-items: center; height: 26px; padding: 0 8px 0 3px; background: #f4f4f4; color: #8f8f8f; }
      header button { width: 14px; height: 14px; padding: 0; border: 0; background: none; }
      header svg { display: block; }
      form { padding: 8px 11px 0; }
      p { margin: 0; line-height: 13px; }
      .list { display: flex; height: 81px; box-sizing: border-box; margin: 2px 0 18px; border: 2px solid; border-color: #777 #fafafa #fafafa #777; background: #fff; }
      #sel + .list { margin-bottom: 9px; }
      ul { flex: 1; margin: 0; padding: 0; list-style: none; }
      li { padding-left: 2px; }
      li[aria-selected=true] { background: #0877d2; color: #fff; }
      .bar { display: flex; flex-direction: column; width: 17px; background: #f6f6f6; }
      .bar button, .bar i { box-sizing: border-box; width: 17px; height: 17px; padding: 0; background: #f0f0f0; border: 1px solid; border-color: #fff #666 #666 #fff; box-shadow: inset -1px -1px #aaa; }
      .bar i { height: 9px; margin: auto 0 6px; }
      .bar svg { display: block; margin: auto; }
      .file, .opts, .buttons { display: flex; align-items: center; padding-right: 7px; }
      .file > label:first-child { gap: 8px; }
      .file input[type=text] { width: 137px; height: 23px; }
      .file label:last-child { width: 60px; margin-left: auto; }
      .opts { height: 28px; margin: 4px 0 6px; gap: 24px; }
      .opts .push { margin-left: auto; }
      .opts .push, .buttons .push { width: 60px; }
      .buttons { justify-content: space-between; margin-bottom: 9px; }
    </style>
    <header><span>Reports</span><button aria-label="Close window"><svg width="12" height="12"><path d="M1 1l10 10M11 1L1 11" stroke="#888"/></svg></button></header>
    <form>
      <p id="av">Available Reports (Double click to select)</p>
      <div class="list">
        <ul role="listbox" aria-labelledby="av">${list.map((t, i) => `<li role="option" aria-selected="${i === 1}">${t}</li>`).join('')}</ul>
        <div class="bar">
          <button type="button" aria-label="Up"><svg width="7" height="4"><path d="M0 4l3.5-4L7 4z"/></svg></button>
          <i></i>
          <button type="button" aria-label="Down"><svg width="7" height="4"><path d="M0 0l3.5 4L7 0z"/></svg></button>
        </div>
      </div>
      <p id="sel">Selected Reports (Double click to remove)</p>
      <div class="list">
        <ul role="listbox" aria-labelledby="sel"><li role="option" aria-selected="true">Summary Drawing Report</li></ul>
      </div>
      <div class="file">
        <label><span>Output File:<br>(optional)</span><input type="text"></label>
        <label><input type="checkbox"> Append</label>
      </div>
      <div class="opts">
        <label><input type="checkbox"> Write Report</label>
        <label><input type="checkbox" checked> Display Report</label>
        <button type="button" class="push">Report</button>
      </div>
      <div class="buttons">
        ${['New/Edit', 'Browse', 'Help', 'Close'].map(t => `<button type="button" class="push">${t}</button>`).join('')}
      </div>
      <p>Number of reports written: 0</p>
    </form>`;
  }
}
customElements.define('report-picker', ReportPicker);

class ReportViewer extends View {
  render() {
    return `<style>
      ${CONTROL_CSS}
      :host { position: absolute; left: 821px; top: 189px; width: 583px; height: 591px; display: flex; flex-direction: column; border-radius: 8px; background: #f1f1f1; font: 11px/13px "Liberation Sans", sans-serif; overflow: hidden; }
      header { display: flex; align-items: center; flex: none; height: 30px; padding: 0 15px 0 9px; gap: 6px; font-size: 12px; color: #222; }
      header span { flex: 1; }
      header button { width: 15px; height: 15px; padding: 0; margin-left: 25px; border: 0; background: none; }
      header svg { display: block; margin: auto; }
      .tools { display: flex; align-items: center; flex: none; height: 30px; }
      .tools button { box-sizing: border-box; width: 28px; height: 28px; padding: 0; background: #c3c3c3; border: 1px solid; border-color: #eee #777 #777 #eee; }
      .tools button svg { display: block; margin: auto; }
      .tools .search { margin: 0 9px 0 8px; gap: 8px; }
      .tools .search input { width: 96px; height: 23px; background: linear-gradient(#000, #000) 1px 1px / 1px 16px no-repeat, #fff; }
      .tools label { gap: 5px; }
      .tools label + label { margin-right: 8px; }
      .page { display: flex; flex: 1; min-height: 0; background: #fff; }
      article { flex: 1; min-width: 0; padding: 15px 10px 0 9px; overflow: hidden; font: 12px/15px "Liberation Mono", monospace; color: #111; white-space: pre; }
      article b { font-size: 13px; line-height: 13px; }
      p { margin: 0; }
      u { text-underline-offset: 2px; }
      hr { height: 1px; margin: 7px 0 8px; border: 0; background: #999; }
      .bar { width: 16px; background: #f0f0f0; display: flex; flex-direction: column; }
      .bar button { height: 34px; padding: 12px 0 0; border: 0; background: none; }
      .bar button svg { display: block; margin: auto; }
      .bar button + i { height: 222px; background: #cdcdcd; margin-bottom: auto; }
    </style>
    <header>
      <svg width="15" height="15"><rect width="15" height="15" fill="#fff"/><path d="M0 2h3l2 2h3l2-3h5M0 6h5l3 2h7M0 10h3l4-3M4 12h5l2-3h4M1 14l4-3M9 14h6M3 4v6M11 3v8" stroke="#1c239a" fill="none"/><path d="M14.5 0v14.5H0" stroke="#1c239a" fill="none"/></svg>
      <span>Summary Drawing Report</span>
      <button aria-label="Minimize"><svg width="10" height="10"><path d="M0 5.5h10" stroke="#222"/></svg></button>
      <button aria-label="Maximize"><svg width="10" height="10"><rect x=".5" y=".5" width="9" height="9" rx="1" fill="none" stroke="#222"/></svg></button>
      <button aria-label="Close"><svg width="12" height="12"><path d="M1 1l10 10M11 1L1 11" stroke="#222"/></svg></button>
    </header>
    <div class="tools">
      <button aria-label="Pin"><svg width="20" height="20"><path d="M2 10h6M8 6v8M9 7h5v5H9zM16 5v10M14 7h2M14 12h2" stroke="#111" fill="#ccc" stroke-width="1.5"/></svg></button>
      <button aria-label="Clear"><svg width="20" height="20"><path d="M4 4l13 12M16 4L4 17" stroke="#a01a1a" stroke-width="2"/></svg></button>
      <button aria-label="Save"><svg width="20" height="20"><rect x="1.5" y="1.5" width="17" height="17" fill="#4b5a50" stroke="#111"/><rect x="5" y="2" width="10" height="8" fill="#fff"/><rect x="5" y="13" width="9" height="5" fill="#111"/><rect x="11" y="14" width="2" height="4" fill="#ddd"/></svg></button>
      <button aria-label="Print"><svg width="20" height="20"><path d="M6 8l2-6h8l-2 6" fill="#fff" stroke="#111"/><path d="M2 10l3-3h13l-2 3v6H3z" fill="#d9d9c8" stroke="#111" stroke-width="1.5"/><path d="M4 12h11M6 18h10l2-4M9 5h5" stroke="#111" fill="none"/></svg></button>
      <button aria-label="Help"><svg width="20" height="22"><path d="M5 8c0-8 11-7 10-1-1 3-5 3-5 7" fill="none" stroke="#111" stroke-width="3"/><circle cx="11" cy="19" r="2"/></svg></button>
      <label class="search">Search:<input type="text"></label>
      <label><input type="checkbox"> Match word</label>
      <label><input type="checkbox"> Match case</label>
    </div>
    <div class="page">
      <article><p><b><u>Design Name</u> E:/BaiduNetdiskDownload/10-LD-RD/1121575-
HSBG_Daul_BAT_VA--V2_0-166-20230210_pcb.brd
<u>Date</u> Fri Sep 15 10:26:07 2023
<u>Drawing Statistics:</u></b>
Drawing Extents XL(-12000.00) YL(-10000.00) XU(488000.00) YU(490000.00)
Dimensions in mils with 2 decimal places
Layers: Total(4) Routing(2) Planes(2)
Design Thickness: 62.600000 mil
Package Symbols: Total(139) Mirrored(47) Embedded(0) Pins(412)
Mechanical Symbols: Total(3) Mirrored(0) Pins(0)
Format Symbols: Total(8)
DRC State: OUT OF DATE
DRC Errors: 10
Short DRC: 0
Waived DRC: 187
Padstack Definitions: 31
Dynamic shapes: Total(44) Out_of_date(0)
Functions: Assigned(133) Unassigned(0) Total(133)</p><hr><p><b><u>Drilling Statistics:</u></b>
Minimum Drill Size (in): 0.008000
Drills: Total(918) Standard NC(918) Nonstandard(0)
Holes: Plated(918) Non-Plated(0)
MultiDrill Padstacks: 0
Vias: Thru(862) BBVias(0) HDI(0)</p><hr><p><b><u>Connection Statistics:</u></b>
Connections: W/Rats(333) No/Rats(0) Total(333)
Already Connected: W/Rats(333) No/Rats(0) Total(333)
Missing Connections: W/Rats(0) No/Rats(0) Total(0)
Dangling Connections (See logfile): 0
Connection Completion: W/Rats(100.00%) No/Rats(0.00%) Total(100.00%)
Manh Distance (inches): 106.25
Etch Length (inches): W/Rats(107.86) No/Rats(0.00) Total(107.86)
Number of Vias: W/Rats(862) No/Rats(0) Total(862)</p></article>
      <div class="bar"><button aria-label="Scroll up"><svg width="12" height="16"><path d="M1 11l5-6 5 6" fill="none" stroke="#555" stroke-width="2.5"/></svg></button><i></i></div>
    </div>`;
  }
}
customElements.define('report-viewer', ReportViewer);

class FindPanel extends View {
  render() {
    const kinds = ['Groups', 'Comps', 'Symbols', 'Functions', 'Nets', 'Pins', 'Vias', 'Clines', 'Lines'];
    return `<style>
      ${CONTROL_CSS}
      :host { display: block; overflow: hidden; border-left: 1px solid #aaa; background: #f0f0f0; font: 12px/13px "Liberation Sans", sans-serif; white-space: nowrap; }
      h2 { display: flex; align-items: center; gap: 4px; height: 16px; margin: 0; padding-left: 3px; background: linear-gradient(90deg, #d0d0d0, #bdbdbd); font: 11px/16px "Liberation Sans", sans-serif; }
      h2 i { width: 3px; height: 8px; background: repeating-linear-gradient(#2f86c9 0 3px, transparent 3px 5px); }
      fieldset { box-sizing: border-box; width: 200px; margin: 8px 0 0 8px; padding: 3px 6px 1px; border: 1px solid #999; }
      legend { padding: 0 1px; font-size: 11px; line-height: 15px; }
      fieldset label { height: 22px; color: #9a9a9a; gap: 5px; }
      fieldset input[type=checkbox] { background: #f0f0f0; }
      .push { display: block; width: 90px; height: 16px; margin-bottom: 2px; padding-left: 6px; line-height: 12px; text-align: left; font-size: 11px; color: #9a9a9a; }
      select { display: block; appearance: none; width: 120px; height: 20px; padding-left: 2px; border: 2px solid; border-color: #777 #eee #eee #777; border-radius: 0; background: #f0f0f0; color: #555; font: inherit; font-size: 11px; }
      .name { color: #111; }
      .name input { height: 20px; }
      .query { margin: 12px 0 0 8px; height: 22px; color: #111; }
    </style>
    <h2><i></i>Find</h2>
    <fieldset><legend>Design Object Find Filter</legend>
      <button type="button" class="push">All On</button>
      ${kinds.map(k => `<label><input type="checkbox" disabled> ${k}</label>`).join('')}
    </fieldset>
    <fieldset><legend>Find By Name</legend>
      <select aria-label="Object type"><option>Symbol (or Pin)</option></select>
      <label class="name">&gt; <input type="text"></label>
    </fieldset>
    <button type="button" class="push query">Find by Query...</button>`;
  }
}
customElements.define('find-panel', FindPanel);

/* ---------- Red pen marks above everything ---------- */

class MarkupLayer extends View {
  // Tapered shaft from (x1, y1), barbed head at (x2, y2)
  arrow(x1, y1, x2, y2) {
    const len = Math.hypot(x2 - x1, y2 - y1), ux = (x2 - x1) / len, uy = (y2 - y1) / len;
    const at = (back, side) => `${(x2 - ux * back - uy * side).toFixed(1)} ${(y2 - uy * back + ux * side).toFixed(1)}`;
    return `<path d="M${at(0, 0)}L${at(18, 9)}L${at(15, 5)}L${at(len, 1)}L${at(len, -1)}L${at(15, -5)}L${at(18, -9)}Z"/>`;
  }
  render() {
    return `<style>
      :host { position: absolute; inset: 0; overflow: hidden; pointer-events: none; }
      svg { position: absolute; width: 1449px; height: 838px; }
      p { position: absolute; left: 1139px; top: 744px; margin: 0; color: #fff; font: 300 44px/60px "Noto Sans CJK SC", sans-serif; white-space: nowrap; text-shadow: -1px -1px 1px #8888, 1px 1px 2px #8888; }
    </style>
    <p>知乎 @丹尼斯</p>
    <svg fill="#fb2413">
      ${this.arrow(434, 135, 491, 253)}${this.arrow(598, 115, 642, 37)}${this.arrow(423, 422, 509, 364)}
      ${this.arrow(635, 390, 722, 460)}${this.arrow(1167, 484, 1223, 398)}
      <ellipse cx="1232" cy="382" rx="52" ry="27" fill="none" stroke="#e8281f" stroke-width="2.5"/>
    </svg>`;
  }
}
customElements.define('markup-layer', MarkupLayer);

/* ---------- Application frame ---------- */

class DesignApp extends View {
  render() {
    return `<style>
      :host { position: relative; display: flex; flex-direction: column; height: 100vh; overflow: hidden; }
      .row { display: flex; height: 34px; flex: none; overflow: hidden; }
      .row tool-group:first-child { margin-left: -16px; }
      .row + .row { height: 35px; }
      .work { display: flex; flex: 1; min-height: 0; }
      .side { flex: none; width: 13px; overflow: hidden; display: flex; flex-direction: column; align-items: flex-end; background: #cacaca; border-right: 2px solid #f4f4f4; }
      .side tool-group { margin-right: -3px; }
      board-canvas { flex: 1; border-top: 2px solid #555; }
      .split { width: 6px; background: #e2e2e2; border-left: 1px solid #aaa; }
      find-panel { width: 37px; }
    </style>
    <menu-bar></menu-bar>
    <div class="row">
      ${group('file open save', 'nogrip')}
      ${group('move copy del undo down redo down ball pin')}
      ${group('ratsOff ratsOn zoomWin zoomFit zoomIn zoomOut zoomPrev zoomSel refresh view3d flip')}
      ${group('grid tiles swap layers cm dfa globe')}
      ${group('info sheetInfo ruler brush sun shade books glass stop')}
    </div>
    <div class="row">
      ${group('card1 card2 card3 card4 card5 blank card6', 'nogrip')}
      ${group('shL shRect shCircle shArrow shL2 shArc shSq shRing shCut shDel')}
      ${group('boardChk dimA dimB')}
      ${group('odb drillGrid drillWrench camera refs drillTab starry tp nodes')}
      ${group('zig')}
      ${group('wvDoc wvBook wvTool wvCheck wvCable')}
      ${group('stack bow bowWin help')}
    </div>
    <div class="work">
      <div class="side">
        ${group('vCyl vRound vCyl', 'column')}
        ${group('vBar vSave vTee vYel vRed vRib vFld vHook', 'column')}
        ${group('vArc vFld vDot vPen', 'column')}
        ${group('vPartR vPart vPartR vPart vPartG vPart vPart', 'column')}
      </div>
      <board-canvas></board-canvas>
      <div class="split"></div>
      <find-panel></find-panel>
    </div>
    <slot name="windows"></slot>
    <markup-layer></markup-layer>`;
  }
}
customElements.define('design-app', DesignApp);
</script>
</body>
</html>
